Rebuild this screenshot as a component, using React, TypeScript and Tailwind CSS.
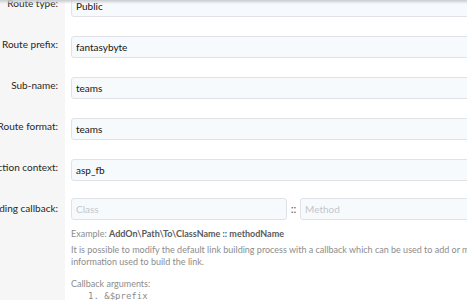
import React from 'react';

const rows = [
  { label: 'Route type:', value: 'Public' },
  { label: 'Route prefix:', value: 'fantasybyte' },
  { label: 'Sub-name:', value: 'teams' },
  { label: 'Route format:', value: 'teams' },
  { label: 'Action context:', value: 'asp_fb' },
];

const Label: React.FC<{ text: string }> = ({ text }) => (
  <div className="w-[65px] shrink-0 bg-[#f6f6f6] overflow-hidden flex justify-end pr-[7px] pt-[13px]">
    <span className="whitespace-nowrap text-[10px] leading-[16px] text-[#262626]">{text}</span>
  </div>
);

const inputCls =
  'h-[22px] rounded-[3px] border border-[#dfe3e8] bg-[#f7fafd] px-[4px] text-[10px] text-[#141414] outline-none placeholder:text-[#c2c6ca]';

export default function App() {
  return (
    <div className="relative w-[467px] h-[300px] overflow-hidden bg-white" style={{ fontFamily: 'Lato, "Noto Sans", sans-serif' }}>
      {/* header shadow */}
      <div className="absolute inset-x-0 top-0 h-[4px] bg-gradient-to-b from-[#c8ccd0] to-transparent z-10" />

      <div className="-mt-[18px] flex flex-col">
        {rows.map(r => (
          <div key={r.label} className="flex h-[41px]">
            <Label text={r.label} />
            <div className="flex-1 pt-[10px] pl-[6px] -mr-[20px]">
              <input readOnly value={r.value} className={`${inputCls} w-full`} />
            </div>
          </div>
        ))}

        <div className="flex h-[150px]">
          <Label text="Link building callback:" />
          <div className="flex-1 pt-[11px] pl-[6px] min-w-0">
            <div className="flex items-center -mr-[20px]">
              <input readOnly placeholder="Class" className={`${inputCls} w-[216px]`} />
              <span className="w-[13px] text-center text-[11px] text-[#555]">::</span>
              <input readOnly placeholder="Method" className={`${inputCls} flex-1 min-w-0`} />
            </div>
            <div className="mt-[8px] text-[9px] leading-[12px] text-[#8c8c8c] whitespace-nowrap">
              <div>
                Example: <b className="text-[#5a5a5a]">AddOn\Path\To\ClassName :: methodName</b>
              </div>
              <div className="mt-[4px]">
                It is possible to modify the default link building process with a callback which can be used to add or modify
              </div>
              <div>information used to build the link.</div>
              <div className="mt-[10px]">Callback arguments:</div>
              <div className="pl-[17px] text-[9px]" style={{ fontFamily: '"DejaVu Sans Mono", monospace' }}>
                1. &amp;$prefix
              </div>
            </div>
          </div>
        </div>
      </div>
    </div>
  );
}
